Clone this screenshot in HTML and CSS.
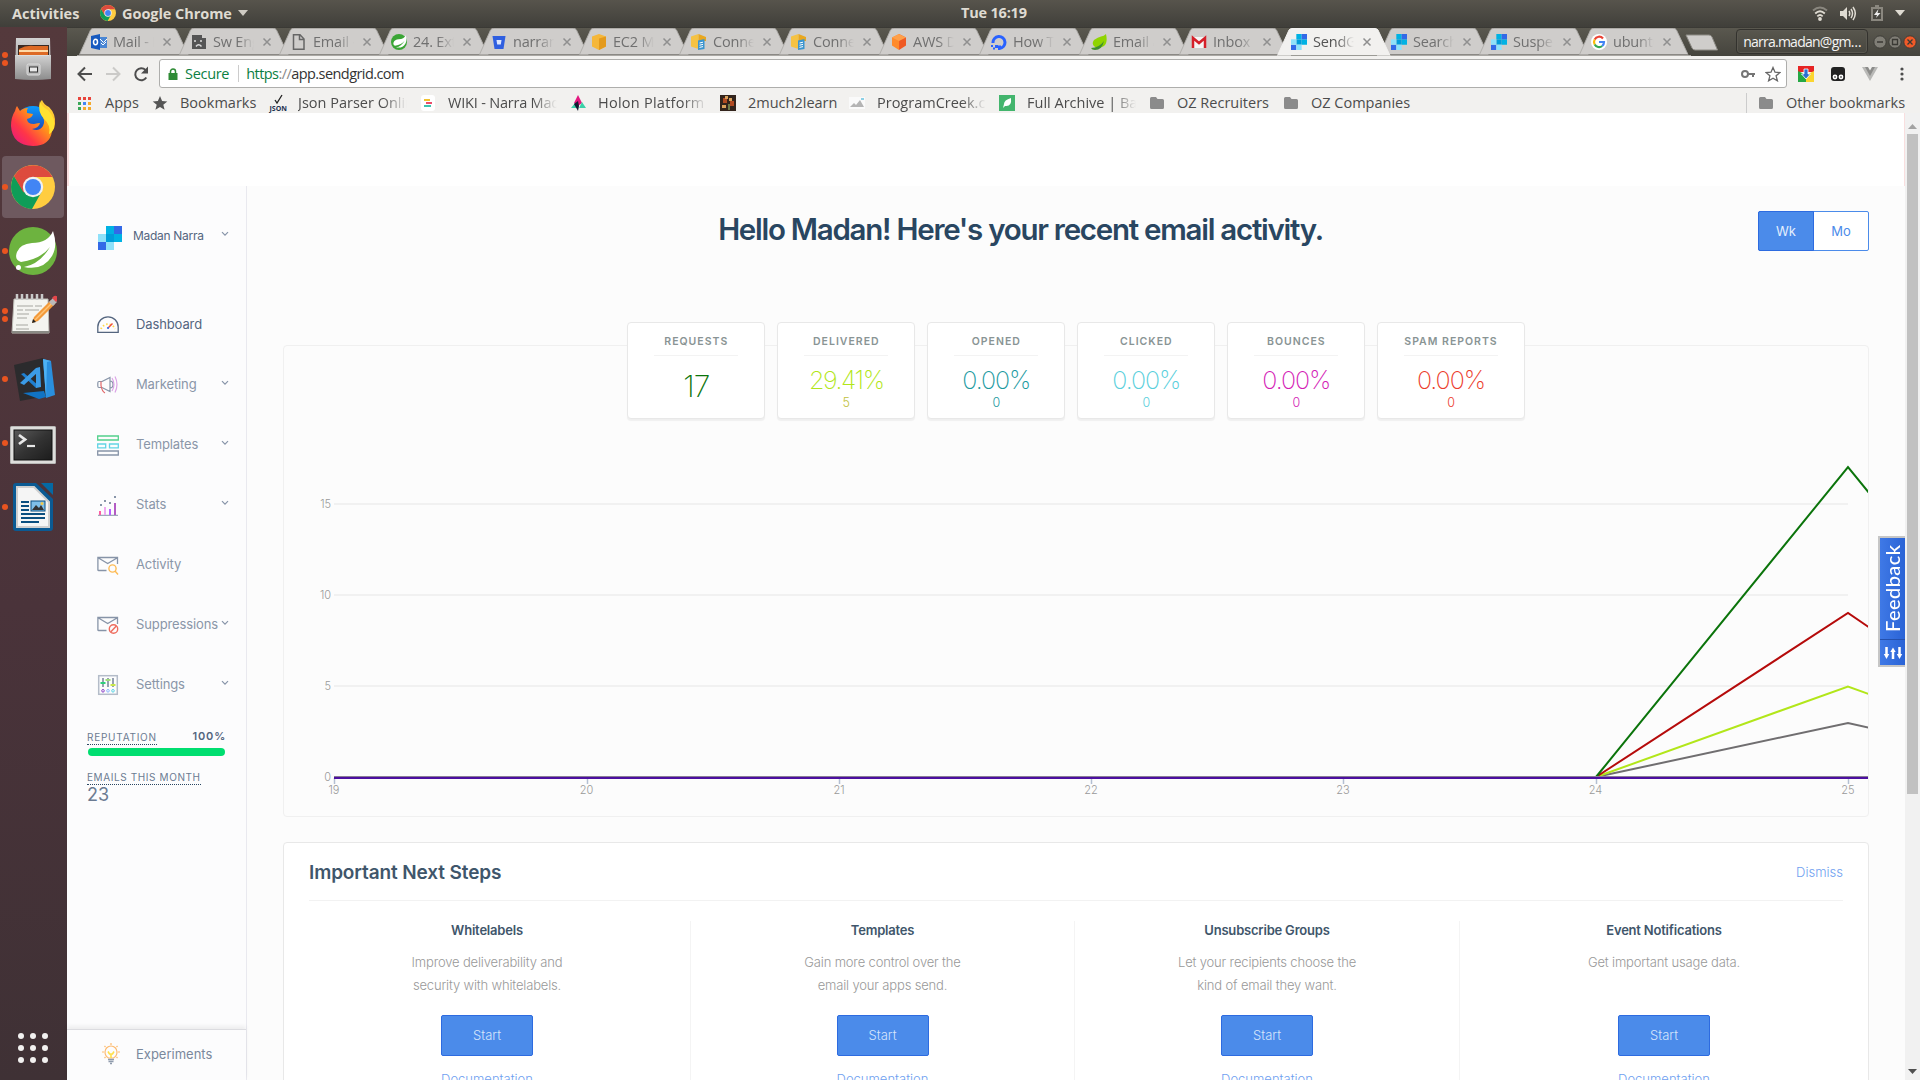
FILE: index.html
```html
<!DOCTYPE html>
<html lang="en">
<head>
<meta charset="utf-8">
<title>SendGrid</title>
<link rel="stylesheet" href="styles.css">
</head>
<body>
<svg class="defs" width="0" height="0" aria-hidden="true">
  <defs>
    <linearGradient id="metal" x1="0" y1="0" x2="0" y2="1"><stop offset="0" stop-color="#d2d2d2"/><stop offset="1" stop-color="#8c8c8c"/></linearGradient>
    <linearGradient id="fox" x1="1" y1="0" x2="0" y2="1"><stop offset="0" stop-color="#fff24a"/><stop offset=".4" stop-color="#ff9a16"/><stop offset=".7" stop-color="#ff3647"/><stop offset="1" stop-color="#e3128b"/></linearGradient>
    <linearGradient id="globe" x1="0" y1="0" x2="0" y2="1"><stop offset="0" stop-color="#0a9bff"/><stop offset="1" stop-color="#2a1b8c"/></linearGradient>
    <linearGradient id="term" x1="0" y1="0" x2="1" y2="1"><stop offset="0" stop-color="#5a5a5a"/><stop offset=".5" stop-color="#333"/><stop offset="1" stop-color="#1c1c1c"/></linearGradient>
    <symbol id="tab" viewBox="0 0 114 28"><path d="M.5 27.5 L12 2 Q13 .5 15 .5 H98 Q100 .5 101 2 L113 27.5" /></symbol>
    <symbol id="close" viewBox="0 0 10 10"><path d="M1.500 1.500 8.500 8.500M8.500 1.500 1.500 8.500" stroke="currentColor" stroke-width="1.500" fill="none"/></symbol>
    <symbol id="sendgrid" viewBox="0 0 24 24"><path fill="#00b2e3" d="M8 0h8v8H8zM16 8h8v8h-8z"/><path fill="#3369e7" d="M16 0h8v8h-8zM0 16h8v8H0z"/><path fill="#009dd9" d="M8 8h8v8H8z"/><path fill="#8fe1fa" d="M0 8h8v8H0zM8 16h8v8H8z"/></symbol>
    <symbol id="chrome" viewBox="0 0 44 44"><circle cx="22" cy="22" r="22" fill="#ffcd40"/><path fill="#dd4b3e" d="M22 22 3 11A22 22 0 0 1 41.500 12H22z"/><path fill="#0f9d58" d="M3 11A22 22 0 0 0 21 44l9.500-17L13 27z"/><path fill="#dd4b3e" d="M3 11 12.500 27.500 22 12z"/><circle cx="22" cy="22" r="10.200" fill="#f1f1f1"/><circle cx="22" cy="22" r="8" fill="#4285f4"/></symbol>
    <symbol id="folder" viewBox="0 0 16 16"><path fill="#8b8b8b" d="M1 3.500Q1 2 2.500 2H7l1.500 2h5Q15 4 15 5.500v7Q15 14 13.500 14h-11Q1 14 1 12.500z"/></symbol>
    <symbol id="cube" viewBox="0 0 16 16"><path fill="#f5b73a" d="M8 0 1 2.500v10L8 16l7-3.500v-10z"/><path fill="#e39a1d" d="M8 4.500 15 2.500v10L8 16z"/></symbol>
    <symbol id="cubedoc" viewBox="0 0 16 16"><path fill="#f5c243" d="M7.500 0 0 2.500v10L7.500 15z"/><path fill="#e8a71f" d="M7.500 0 15 3v4H7.500z"/><path fill="#3b95cf" d="M7 6.500 13.500 5v10L7 16z"/><path stroke="#fff" d="m8.500 9 3.500-.8m-3.500 3 3.500-.8m-3.500 3 3.500-.8"/></symbol>
    <symbol id="chev" viewBox="0 0 8 6"><path d="M1 1.200 4 4.200 7 1.200" fill="none" stroke="#8794a8" stroke-width="1.200"/></symbol>
    <symbol id="mail" viewBox="0 0 22 20"><path d="M9.500 15.500h-8Q.9 15.500.9 14.900V2.500H20.500v6.500M1.500 3l9.200 5.500L20 3" fill="none" stroke="#8794a8" stroke-width="1.300"/></symbol>
  </defs>
</svg>

<header class="topbar">
  <span class="topbar-item">Activities</span>
  <span class="app-menu"><svg width="16" height="16"><use href="#chrome"/></svg><span>Google Chrome</span><svg width="10" height="6" viewBox="0 0 10 6"><path d="M0 0h10L5 6z" fill="#cfcbc3"/></svg></span>
  <span class="clock">Tue 16:19</span>
  <span class="tray">
    <svg width="16" height="15" viewBox="0 0 16 15" fill="none" stroke="#dfdbd2" stroke-width="1.800"><path d="M1 4.500Q8-1.500 15 4.500" stroke="#8a877f"/><path d="M3.200 7.500Q8 3 12.800 7.500M5.300 10.300Q8 7.800 10.700 10.300"/><circle cx="8" cy="13" r="1" fill="#dfdbd2"/></svg>
    <svg width="16" height="15" viewBox="0 0 16 15" fill="none" stroke="#dfdbd2" stroke-width="1.500"><path d="M0 5h3l4-4v13l-4-4H0z" fill="#dfdbd2" stroke="none"/><path d="M9 5q1.500 2.500 0 5M11 3q3 4.500 0 9M13 1q4.500 6.500 0 13"/></svg>
    <svg width="12" height="16" viewBox="0 0 12 16"><path d="M1 3h10v12H1zM4 1h4" fill="none" stroke="#8a877f" stroke-width="2"/><path d="M7.500 4 3 10h3l-1 3 4.500-5h-3z" fill="#eee"/></svg>
    <svg width="10" height="6" viewBox="0 0 10 6"><path d="M0 0h10L5 6z" fill="#dfdbd2"/></svg>
  </span>
</header>

<div class="desktop">
<nav class="dock">
  <div class="dock-item"><i class="dots"><b></b><b></b></i><svg width="48" height="48" viewBox="0 0 48 48"><path d="M7 3h34l1 40H6z" fill="url(#metal)"/><path d="M9 10h31v14H9z" fill="#3a2a24"/><path d="M10 14q7-4 15-3h14v12H10z" fill="#dd6a25"/><path d="M10 16h29" stroke="#ffd9a6" stroke-width="2"/><path d="M6 20h36v24q-18 2-36 0z" fill="url(#metal)"/><path d="M8 20.500h32" stroke="#ddd"/><rect x="18" y="29" width="13" height="11" rx="1.500" fill="#bbb" stroke="#ddd"/><rect x="20.500" y="32" width="8" height="5" fill="#e8e8e8" stroke="#333"/></svg></div>
  <div class="dock-item"><i class="dots"></i><svg width="48" height="48" viewBox="0 -2 48 48"><circle cx="24" cy="24" r="19" fill="url(#globe)"/><path fill="url(#fox)" d="M6 10q1-4 2-5l3 5q3-3 8-3-2 2-1 5l6 1q-1 4-6 5 0 5 7 5 4-1 6-1-1 5-8 6 7 3 11-3 3-6-2-12-2-7 0-13l1-1q2 5 7 7 7 7 6 17 0 4-3 7-2 15-19 15Q3 44 2 25q0-9 4-15z"/><path fill="#ffe232" d="M31 0q2 6 8 9 8 8 6 18-2 5-5 6 2-9-5-15-7-8-4-18z"/></svg></div>
  <div class="dock-item is-active"><i class="dots"><b></b></i><svg width="48" height="48" viewBox="-2 -2 48 48"><use href="#chrome" width="44" height="44"/></svg></div>
  <div class="dock-item"><i class="dots"><b></b></i><svg width="48" height="48" viewBox="0 0 48 48"><circle cx="24" cy="24" r="24" fill="#6db33f"/><path fill="#fff" d="M44 4q5 15-1 25-9 15-28 11 16-3 26-20-9 12-29 15Q5 33 8 25q3-8 15-9 16 0 21-12z"/><circle cx="9.500" cy="40.500" r="2.500" fill="#fff"/></svg></div>
  <div class="dock-item"><i class="dots"><b></b><b></b></i><svg width="48" height="48" viewBox="0 0 48 48"><path d="M5 8h34l1 34H3z" fill="#f4f4f0" stroke="#bdbdb6"/><path d="M3 41h37" stroke="#8a8a84" stroke-width="2"/><path d="M8 3v6m5-6v6m5-6v6m5-6v6m5-6v6m5-6v6" stroke="#c9c9c9" stroke-width="2.500"/><path d="M8 15h16m2 0h7M8 19h6m2 0h14M8 23h12M8 27h10M7 34h12M7 38h13" stroke="#a5a5a0" stroke-width="1.200"/><path d="M23 32l2-6L42 9l4 4-17 17z" fill="#f39a3a"/><path d="M26 29 44 11" stroke="#ffc478" stroke-width="1.500"/><path d="m40 11 4-4 4 4-4 4z" fill="#b9b9b9"/><path d="m43 7 2-2q4-1 4 3l-2 3z" fill="#e4474b"/><path d="m23 32 1-4 3 3z" fill="#222"/></svg></div>
  <div class="dock-item"><i class="dots"><b></b></i><svg width="48" height="48" viewBox="0 0 48 48"><path d="M5 10 34 3l9 37-32 6z" fill="#2b2b2d"/><path d="m34 4 8 2 4 34-9 3z" fill="#2a8fde"/><path d="m34 4 8 2-4 1-1 36z" fill="#4db2f5"/><path d="m14 38 21-2 2 6-7 2z" fill="#1173c4"/><path d="m12 19 3-1 15 13-3 2z" fill="#1f7fd0"/><path d="m27 13 4-1 1 20-5 1zM11 28l16-15 1 5-13 12z" fill="#3b9be6"/></svg></div>
  <div class="dock-item"><i class="dots"><b></b></i><svg width="48" height="48" viewBox="0 -1 48 48"><rect x="1" y="6" width="46" height="38" rx="1.500" fill="#b9b9b7"/><rect x="2" y="7" width="44" height="36" fill="#dededc"/><rect x="5" y="10" width="38" height="30" fill="url(#term)" stroke="#111"/><path d="m10 15 6 4.500L10 24" fill="none" stroke="#e8e8e8" stroke-width="2.800"/><path d="M18 26h8" stroke="#e8e8e8" stroke-width="2.200"/></svg></div>
  <div class="dock-item"><i class="dots"><b></b></i><svg width="48" height="48" viewBox="0 0 48 48"><path d="M7 0h20l17 16v29q0 3-3 3H7q-3 0-3-3V3q0-3 3-3z" fill="#0b5a93"/><path d="M32 0h12v12z" fill="#0569a3"/><path d="M8 4h17l15 15v25H8z" fill="#f5f5f5" stroke="#cfcfcf" stroke-width="2"/><path d="M12 19h8M12 23h8M12 27h8M12 31h24M12 35h24M12 39h18" stroke="#0b4f80" stroke-width="2"/><rect x="22" y="18" width="14" height="10" fill="#7fbfe8" stroke="#0b4f80"/><path d="m23 27 4-5 3 3 2-3 3 5z" fill="#333"/><circle cx="33" cy="20.500" r="1.500" fill="#f2c94c"/></svg></div>
  <svg class="apps-grid" width="32" height="32" viewBox="0 0 32 32" fill="#f2f1f0"><circle cx="4" cy="4" r="3"/><circle cx="16" cy="4" r="3"/><circle cx="28" cy="4" r="3"/><circle cx="4" cy="16" r="3"/><circle cx="16" cy="16" r="3"/><circle cx="28" cy="16" r="3"/><circle cx="4" cy="28" r="3"/><circle cx="16" cy="28" r="3"/><circle cx="28" cy="28" r="3"/></svg>
</nav>

<div class="window">
  <div class="tabstrip">
    <div class="tab"><svg class="shape"><use href="#tab"/></svg><svg class="fav" viewBox="0 0 16 16"><path fill="#4a86d4" d="M8 3h8v11H8z"/><path d="m9 5 3.500 3.500L16 5M10 9l2 2 3-3" stroke="#fff" fill="none"/><path fill="#1659bf" d="m0 2 9-2v16l-9-2z"/><ellipse cx="4.500" cy="8" rx="2" ry="2.700" fill="none" stroke="#fff" stroke-width="1.500"/></svg><span>Mail - M</span><svg class="x"><use href="#close"/></svg></div>
    <div class="tab"><svg class="shape"><use href="#tab"/></svg><svg class="fav" viewBox="0 0 16 16"><path fill="#555" d="M1 1h10v3h4v11H1z"/><path stroke="#ddd" d="M4 6v2m6-2v2M5 12.500Q7.500 9 10.500 12.500" fill="none" stroke-width="1.500"/></svg><span>Sw Engi</span><svg class="x"><use href="#close"/></svg></div>
    <div class="tab"><svg class="shape"><use href="#tab"/></svg><svg class="fav" viewBox="0 0 16 16"><path d="M2.500.8H9L13 5v10.200H2.500zM8.500 1v4.500H13" fill="none" stroke="#666" stroke-width="1.500"/></svg><span>Email -</span><svg class="x"><use href="#close"/></svg></div>
    <div class="tab"><svg class="shape"><use href="#tab"/></svg><svg class="fav" viewBox="0 0 48 48"><circle cx="24" cy="24" r="24" fill="#3aa535"/><path fill="#fff" d="M44 4q5 15-1 25-9 15-28 11 16-3 26-20-9 12-29 15Q5 33 8 25q3-8 15-9 16 0 21-12z"/></svg><span>24. Exte</span><svg class="x"><use href="#close"/></svg></div>
    <div class="tab"><svg class="shape"><use href="#tab"/></svg><svg class="fav" viewBox="0 0 16 16"><path fill="#2f5fe0" d="M1.500 2h13l-2 13h-9z"/><path fill="#dce6ff" d="M5.500 6h5l-.7 4.500H6.200z"/></svg><span>narram</span><svg class="x"><use href="#close"/></svg></div>
    <div class="tab"><svg class="shape"><use href="#tab"/></svg><svg class="fav"><use href="#cube"/></svg><span>EC2 Ma</span><svg class="x"><use href="#close"/></svg></div>
    <div class="tab"><svg class="shape"><use href="#tab"/></svg><svg class="fav"><use href="#cubedoc"/></svg><span>Connec</span><svg class="x"><use href="#close"/></svg></div>
    <div class="tab"><svg class="shape"><use href="#tab"/></svg><svg class="fav"><use href="#cubedoc"/></svg><span>Connec</span><svg class="x"><use href="#close"/></svg></div>
    <div class="tab"><svg class="shape"><use href="#tab"/></svg><svg class="fav" viewBox="0 0 16 16"><path fill="#ff8a2a" d="M8 0 1 3.500v8L8 16z"/><path fill="#ef5a24" d="m8 0 7 3.500v8L8 16z"/><path fill="#ffa04a" d="m8 0 7 3.500L8 7 1 3.500z"/></svg><span>AWS De</span><svg class="x"><use href="#close"/></svg></div>
    <div class="tab"><svg class="shape"><use href="#tab"/></svg><svg class="fav" viewBox="0 0 16 16"><path d="M2 9a6 6 0 1 1 6.500 5.500v-3" fill="none" stroke="#2962ff" stroke-width="3"/><path fill="#2962ff" d="M4 11h3v3H4zM2 13.500h2v2H2zM0 11h2v2H0z"/></svg><span>How To</span><svg class="x"><use href="#close"/></svg></div>
    <div class="tab"><svg class="shape"><use href="#tab"/></svg><svg class="fav" viewBox="0 0 16 16"><path fill="#8fd400" d="M15 0q2 9-2 12-4 3-9 1Q0 10 3 6q4-3 7-3.500T15 0z"/><path fill="#3f8f2f" d="M0 14q8 0 13-7-2 9-9 9-3 0-4-2z"/></svg><span>Email a</span><svg class="x"><use href="#close"/></svg></div>
    <div class="tab"><svg class="shape"><use href="#tab"/></svg><svg class="fav" viewBox="0 0 16 16"><path fill="#f5f5f5" d="M1 3h14v11H1z"/><path d="M2 14V4l6 5 6-5v10" fill="none" stroke="#d5202a" stroke-width="2.500"/></svg><span>Inbox (1</span><svg class="x"><use href="#close"/></svg></div>
    <div class="tab current"><svg class="shape"><use href="#tab"/></svg><svg class="fav"><use href="#sendgrid"/></svg><span>SendGr</span><svg class="x"><use href="#close"/></svg></div>
    <div class="tab"><svg class="shape"><use href="#tab"/></svg><svg class="fav"><use href="#sendgrid"/></svg><span>Search</span><svg class="x"><use href="#close"/></svg></div>
    <div class="tab"><svg class="shape"><use href="#tab"/></svg><svg class="fav"><use href="#sendgrid"/></svg><span>Suspen</span><svg class="x"><use href="#close"/></svg></div>
    <div class="tab"><svg class="shape"><use href="#tab"/></svg><svg class="fav" viewBox="0 0 16 16"><circle cx="8" cy="8" r="8" fill="#fff"/><g fill="none" stroke-width="2.200"><path d="M12 4.500A5 5 0 0 0 3.700 5.500" stroke="#ea4335"/><path d="M3.700 5.500a5 5 0 0 0 0 5" stroke="#fbbc05"/><path d="M3.700 10.500a5 5 0 0 0 7.500 1.500" stroke="#34a853"/><path d="M11.200 12q1.800-1.500 1.800-4H8" stroke="#4285f4"/></g></svg><span>ubuntu</span><svg class="x"><use href="#close"/></svg></div>
    <svg class="newtab" width="34" height="17" viewBox="0 0 34 17"><path d="M1 1h23q2 0 3 2l5.500 13H10q-2 0-3-2z" fill="#cfcdcb" stroke="#8e8c86"/></svg>
    <div class="profile">narra.madan@gm…</div>
    <svg class="winbtns" width="44" height="14" viewBox="0 0 44 14"><g fill="#807e76" stroke="#3d3c37"><circle cx="7" cy="7" r="6.200"/><circle cx="22" cy="7" r="6.200"/><circle cx="37" cy="7" r="6.200" fill="#f05a28"/></g><path d="M4 7h6M19.500 4.500h5v5h-5zM34.500 4.500l5 5m0-5-5 5" fill="none" stroke="#3a3934" stroke-width="1.300"/></svg>
  </div>

  <div class="toolbar">
    <div class="navbtns">
      <svg width="16" height="16" viewBox="0 0 16 16" fill="none" stroke="#4d4d4d" stroke-width="2"><path d="M15 8H2M8 1.500 1.500 8 8 14.500"/></svg>
      <svg width="16" height="16" viewBox="0 0 16 16" fill="none" stroke="#cbcac8" stroke-width="2"><path d="M1 8h13M8 1.500 14.500 8 8 14.500"/></svg>
      <svg width="16" height="16" viewBox="0 0 16 16"><path d="M13.300 11.500A6 6 0 1 1 12.500 4" fill="none" stroke="#4d4d4d" stroke-width="2"/><path d="M15 .5v7H8z" fill="#4d4d4d"/></svg>
    </div>
    <div class="omnibox">
      <svg width="10" height="12" viewBox="0 0 10 12"><path d="M.5 5h9v7h-9z" fill="#2e8b35"/><path d="M2.500 5.500V3.500a2.500 2.500 0 0 1 5 0v2" fill="none" stroke="#2e8b35" stroke-width="1.500"/></svg>
      <span class="secure">Secure</span>
      <span class="url"><em>https</em><i>://</i>app.sendgrid.com</span>
      <svg width="15" height="10" viewBox="0 0 15 10"><circle cx="4" cy="5" r="3" fill="none" stroke="#757575" stroke-width="2"/><path d="M6.500 4H14v2h-1v2h-2V6H6.500z" fill="#757575"/></svg>
      <svg class="fav-star" width="16" height="16" viewBox="0 0 16 16"><path d="m8 1.500 2 4.700 5 .4-3.900 3.200 1.300 5L8 12.200l-4.400 2.600 1.300-5L1 6.600l5-.4z" fill="none" stroke="#666" stroke-width="1.300"/></svg>
    </div>
    <div class="extensions">
      <svg width="16" height="16" viewBox="0 0 16 16"><path fill="#e62424" d="M0 0h16v6H0z"/><path fill="#25a844" d="M0 5 8 9v7H0z"/><path fill="#fbd530" d="M16 5 8 9v7h8z"/><path fill="#2b6fd3" stroke="#fff" stroke-width=".8" d="M6 3h4v5h2.500L8 13 3.500 8H6z"/></svg>
      <svg width="16" height="16" viewBox="0 0 16 16"><rect x="1" y="1" width="14" height="14" rx="3" fill="#222"/><circle cx="5" cy="11" r="2.400" fill="#fff"/><circle cx="11" cy="11" r="2.400" fill="#fff"/><path d="M5 10v2m6-2v2" stroke="#222"/></svg>
      <svg width="16" height="16" viewBox="0 0 16 16"><path fill="#b9b9b7" d="M0 1h4.500L8 7.500 11.500 1H16L8 15z"/><path fill="#8c8c8a" d="M3 1h3l2 3.500L10 1h3L8 10z"/></svg>
      <svg class="kebab" width="4" height="14" viewBox="0 0 4 14" fill="#4d4d4d"><circle cx="2" cy="2" r="1.600"/><circle cx="2" cy="7" r="1.600"/><circle cx="2" cy="12" r="1.600"/></svg>
    </div>
  </div>

  <div class="bookmarks">
    <a><svg viewBox="0 0 16 16"><path fill="#e8453c" d="M1 2h3v3H1zM6 2h3v3H6zM11 2h3v3h-3z"/><path fill="#4285f4" d="M6 7h3v3H6z"/><path fill="#3aa757" d="M1 7h3v3H1zM1 12h3v3H1z"/><path fill="#f4a92b" d="M11 7h3v3h-3zM6 12h3v3H6zM11 12h3v3h-3z"/></svg><span>Apps</span></a>
    <a><svg viewBox="0 0 16 16"><path fill="#555" d="m8 1 2.100 5 5.200.4-4 3.300 1.300 5L8 12l-4.600 2.700 1.300-5-4-3.300L5.900 6z"/></svg><span>Bookmarks</span></a>
    <a><svg viewBox="0 0 16 16"><path d="m5 5 2 3 5-8" fill="none" stroke="#222" stroke-width="1.300"/><text x="-.5" y="15.500" class="json">JSON</text></svg><span class="fade">Json Parser Onlin</span></a>
    <a><svg viewBox="0 0 16 16"><rect x="1" width="14" height="16" rx="3" fill="#fff"/><path stroke="#f2c230" stroke-width="2" d="M4 5h6"/><path stroke="#ea4d6b" stroke-width="2" d="M6 8h6"/><path stroke="#3cc3b0" stroke-width="2" d="M4 11h7"/></svg><span class="fade tight">WIKI - Narra Mada</span></a>
    <a><svg viewBox="0 0 16 16"><path fill="#e3177f" d="m8 0 4 8-4 3-4-3z"/><path fill="#3cd0a8" d="m1 13 4-5 3 5zM9 13l3-6 4 6z"/><path fill="#141c33" d="m4 9 4-3 1 5-1 5z"/></svg><span class="fade loose">Holon Platform -</span></a>
    <a><svg viewBox="0 0 16 16"><path fill="#33241c" d="M0 0h16v16H0z"/><path fill="#b04a22" d="M3 3h4v5H3zM10 6h4v5h-4z"/><path fill="#d9a15c" d="M5 1h3v3H5zM9 3h3v3H9zM2 10h4v3H2z"/><path fill="#6e7a4a" d="M8 9h2v6H8z"/></svg><span>2much2learn</span></a>
    <a><svg viewBox="0 0 16 16"><path fill="#fafafa" d="M0 2h16v12H0z"/><path fill="#b4b4b4" d="m1 12 4-4 2 2 4-5 4 7z"/><path fill="#8cd0e6" d="M12 3h3v2h-3z"/></svg><span class="fade">ProgramCreek.com</span></a>
    <a><svg viewBox="0 0 16 16"><path fill="#43b56d" d="M0 0h16v16H0z"/><path fill="#fff" d="M12 3q1 9-6 8l-2 2 1-4q0-4 7-6z"/></svg><span class="fade">Full Archive | Bael</span></a>
    <a><svg><use href="#folder"/></svg><span>OZ Recruiters</span></a>
    <a><svg><use href="#folder"/></svg><span>OZ Companies</span></a>
    <a class="other"><svg><use href="#folder"/></svg><span>Other bookmarks</span></a>
  </div>

  <div class="viewport">
    <div class="page">
      <div class="banner"></div>
      <div class="app">
        <aside class="sidebar">
          <div class="account"><svg width="24" height="24"><use href="#sendgrid"/></svg><span>Madan Narra</span><svg class="chev"><use href="#chev"/></svg></div>
          <ul class="menu">
            <li class="on"><svg viewBox="0 0 22 20"><path d="M.8 17.400V12a10.200 10.200 0 0 1 20.400 0v5.400z" fill="none" stroke="#54657f" stroke-width="1.300"/><path d="M4 14a7.500 7.500 0 0 1 14 0" fill="none" stroke="#ffd84a" stroke-width="1.800" stroke-dasharray="1.500 2"/><path d="m11 13 4.500-4.500" stroke="#ee4b3c" stroke-width="1.500"/><circle cx="11" cy="13" r="1.100" fill="#3369e7"/></svg><span>Dashboard</span></li>
            <li><svg viewBox="0 0 22 20"><path d="m5 6.500 8-4v14l-8-4H2Q.8 12.500.8 11V8q0-1.500 1.200-1.500zM13 6q3 0 3 3.500T13 13" fill="none" stroke="#8794a8" stroke-width="1.200"/><path d="M4 6.500v4q1 6 4 7.500" fill="none" stroke="#e2686a" stroke-width="1.200"/><path d="M15 3q4 6.500 0 13M18 1.500q4 8 0 16" fill="none" stroke="#dba4e6" stroke-width="1.200"/></svg><span>Marketing</span><svg class="chev"><use href="#chev"/></svg></li>
            <li><svg viewBox="0 0 22 22"><g fill="none" stroke-width="1.300"><path d="M.7 2h20.600v4H.7z" stroke="#53d08c"/><path d="M.7 10h8v3.800h-8zM12.500 10h8.800v3.800h-8.800z" stroke="#62d4e4"/><path d="M.7 17h20.600v4H.7z" stroke="#8794a8"/></g></svg><span>Templates</span><svg class="chev"><use href="#chev"/></svg></li>
            <li><svg viewBox="0 0 22 22"><path d="M1 21.300h20" stroke="#8794a8"/><path d="M3 21v-4" stroke="#ff5fa5" stroke-width="2"/><path d="M8 21v-8" stroke="#f1a8f0" stroke-width="2"/><path d="M13 21v-6" stroke="#b861ff" stroke-width="2"/><path d="M18 21V9" stroke="#b35cc4" stroke-width="2"/><path d="M3 10h2v2H3zM7 6h2v2H7zM12 8h2v2h-2zM17 2h2v2h-2z" fill="#8794a8"/></svg><span>Stats</span><svg class="chev"><use href="#chev"/></svg></li>
            <li><svg viewBox="0 0 22 20"><use href="#mail" width="22" height="20"/><circle cx="15.500" cy="13.500" r="3.600" fill="#fcfcfd" stroke="#fdbb55" stroke-width="1.400"/><path d="m18 16 3 3.500" stroke="#fdbb55" stroke-width="1.400"/></svg><span>Activity</span></li>
            <li><svg viewBox="0 0 22 20"><use href="#mail" width="22" height="20"/><circle cx="16.500" cy="14" r="4.200" fill="#fcfcfd" stroke="#ee6c5e" stroke-width="1.400"/><path d="m13.700 17 5.600-6" stroke="#ee6c5e" stroke-width="1.400"/></svg><span>Suppressions</span><svg class="chev"><use href="#chev"/></svg></li>
            <li><svg viewBox="0 0 22 22"><rect x="1.700" y="1.700" width="18.600" height="18.600" fill="none" stroke="#b4bcc9" stroke-width="1.500"/><path d="M6 4v9M11 4v9M16 4v9" stroke="#54657f" stroke-width="1.200"/><path d="M3.500 9h5" stroke="#2fcf7b" stroke-width="2"/><path d="M8.500 6h5" stroke="#9edb7c" stroke-width="2"/><path d="M13.500 11h5" stroke="#c8e64a" stroke-width="2"/><g fill="none"><circle cx="6" cy="16.800" r="1.300" stroke="#8e44c9"/><circle cx="11" cy="16.800" r="1.300" stroke="#8eb8ff"/><circle cx="16" cy="16.800" r="1.300" stroke="#5cd5e5"/></g></svg><span>Settings</span><svg class="chev"><use href="#chev"/></svg></li>
          </ul>
          <div class="usage">
            <div class="rep"><abbr>REPUTATION</abbr><strong>100%</strong></div>
            <div class="bar"></div>
            <abbr class="emails">EMAILS THIS MONTH</abbr>
            <div class="count">23</div>
          </div>
          <div class="experiments"><svg width="20" height="22" viewBox="0 0 20 22"><path d="M7.500 15q-3.500-2-3.500-6a6 6 0 0 1 12 0q0 4-3.500 6z" fill="none" stroke="#fdbb70" stroke-width="1.200"/><path d="M10 0v2M1 9H3M17 9h2M3.500 3l1 1M16.500 3l-1 1M3.500 15l1-1M16.500 15l-1-1" stroke="#fdbb70" stroke-width="1.200"/><path d="M7 8.500l1.500 2.500h3L13 8.500M10 11v4" fill="none" stroke="#ffe04a" stroke-width="1.600"/><path d="M7 16.500h6M7.500 18.500h5M9 20.500h2" stroke="#8f9bad" stroke-width="1.600"/></svg><span>Experiments</span></div>
        </aside>

        <main class="main">
          <div class="hero">
            <h1>Hello Madan! Here's your recent email activity.</h1>
            <div class="toggle"><span class="sel">Wk</span><span>Mo</span></div>
          </div>
          <section class="chart">
            <div class="cards">
              <div class="card c-req"><h4>REQUESTS</h4><p>17</p></div>
              <div class="card c-del"><h4>DELIVERED</h4><p>29.41%</p><small>5</small></div>
              <div class="card c-ope"><h4>OPENED</h4><p>0.00%</p><small>0</small></div>
              <div class="card c-cli"><h4>CLICKED</h4><p>0.00%</p><small>0</small></div>
              <div class="card c-bou"><h4>BOUNCES</h4><p>0.00%</p><small>0</small></div>
              <div class="card c-spa"><h4>SPAM REPORTS</h4><p>0.00%</p><small>0</small></div>
            </div>
            <svg class="plot" viewBox="284 419 1584 396">
              <path d="M334 504H1848M334 595H1848M334 686H1848" stroke="#f1f1f1" stroke-width="2"/>
              <path d="M334.500 778v6M587.500 778v6M839.500 778v6M1091.500 778v6M1343.500 778v6M1596.500 778v6M1848.500 778v6" stroke="#b3bfd2" stroke-width="1.500"/>
              <g fill="none" stroke-width="2">
                <path d="M334 777H1596L1848 723l22 5" stroke="#706e70"/>
                <path d="M1596 777 1848 686.500l22 8" stroke="#b2e61a"/>
                <path d="M1596 777 1848 613l22 15" stroke="#b50b0b"/>
                <path d="M1596 777 1848 467l22 27" stroke="#0b740b"/>
                <path d="M334 776.500H1870" stroke="#8a7f96" stroke-width="1"/>
                <path d="M334 778H1870" stroke="#4c0fa0"/>
              </g>
              <g class="ylab"><text x="331" y="507.500">15</text><text x="331" y="599">10</text><text x="331" y="690">5</text><text x="331" y="781">0</text></g>
              <g class="xlab"><text x="334" y="794">19</text><text x="586.500" y="794">20</text><text x="839" y="794">21</text><text x="1091" y="794">22</text><text x="1343" y="794">23</text><text x="1595.500" y="794">24</text><text x="1848" y="794">25</text></g>
            </svg>
          </section>
          <section class="steps">
            <div class="steps-head"><h2>Important Next Steps</h2><a>Dismiss</a></div>
            <div class="steps-grid">
              <div class="step"><h3>Whitelabels</h3><p>Improve deliverability and<br>security with whitelabels.</p><button>Start</button><a>Documentation</a></div>
              <div class="step"><h3>Templates</h3><p>Gain more control over the<br>email your apps send.</p><button>Start</button><a>Documentation</a></div>
              <div class="step"><h3>Unsubscribe Groups</h3><p>Let your recipients choose the<br>kind of email they want.</p><button>Start</button><a>Documentation</a></div>
              <div class="step"><h3>Event Notifications</h3><p>Get important usage data.</p><button>Start</button><a>Documentation</a></div>
            </div>
          </section>
          <div class="feedback"><span>Feedback</span><svg width="20" height="14" viewBox="0 0 20 14" stroke="#fff" stroke-width="2.500" fill="#fff"><path d="M3.500 1v8M10 13V5M16.500 1v8"/><path d="M.8 8h5.400l-2.700 5zM7.300 6h5.400L10 1.500zM13.800 8h5.400l-2.700 5z" stroke="none"/></svg></div>
        </main>
      </div>
    </div>
    <div class="scrollbar"><svg width="9" height="5" viewBox="0 0 9 5"><path d="M0 5h9L4.500 0z" fill="#a3a3a3"/></svg><div class="thumb"></div><svg width="9" height="5" viewBox="0 0 9 5"><path d="M0 0h9L4.500 5z" fill="#505050"/></svg></div>
  </div>
</div>
</div>
</body>
</html>
```

FILE: styles.css
```css
* { box-sizing: border-box; margin: 0; padding: 0; }
html, body { width: 1920px; height: 1080px; overflow: hidden; }
body { display: flex; flex-direction: column; font-family: "Open Sans", "Noto Sans", sans-serif; background: #fcfcfc; }
svg { display: block; flex: none; }
.defs { position: absolute; }

/* desktop shell */
.topbar { height: 27px; flex: none; display: grid; grid-template-columns: 100px 1fr auto 1fr; align-items: center; padding-bottom: 1px; background: linear-gradient(#57544c, #403f3a); color: #dfdbd2; font: 700 14.5px "Open Sans", sans-serif; position: relative; }
.topbar-item { padding-left: 12px; letter-spacing: 0; }
.app-menu { display: flex; align-items: center; gap: 6px; letter-spacing: -.05px; }
.clock { position: absolute; left: 961px; top: 3px; letter-spacing: -.2px; }
.tray { grid-column: 4; justify-self: end; display: flex; align-items: center; gap: 12px; padding-right: 15px; }
.tray svg:nth-child(3) { margin: 0 0 0 3px; }
.desktop { flex: 1; display: flex; min-height: 0; }
.dock { width: 67px; flex: none; display: flex; flex-direction: column; gap: 2px; background: linear-gradient(#54393c, #4a333a 55%, #3f3135); }
.dock-item { width: 62px; height: 62px; margin-left: 2px; display: flex; align-items: center; border-radius: 4px; }
.dock-item:first-child { margin-top: 1px; }
.dock-item.is-active { background: #6e595f; }
.dots { width: 7px; display: flex; flex-direction: column; gap: 2px; }
.dots b { width: 6px; height: 6px; border-radius: 50%; background: #e95420; }
.apps-grid { margin: auto 0 16px 17px; }

/* browser chrome */
.window { flex: 1; min-width: 0; display: flex; flex-direction: column; background: #f2f1ef; }
.tabstrip { height: 29px; flex: none; display: flex; align-items: flex-end; padding-left: 24px; background: linear-gradient(#5a584f, #45443d); border-top: 1px solid #3b3a35; }
.tab { position: relative; width: 100px; height: 28px; flex: none; display: flex; align-items: center; color: #707070; font-size: 14.5px; }
.tab > * { position: relative; }
.tab .shape { position: absolute; left: -14px; top: 0; width: 114px; height: 28px; fill: #cfcdcb; stroke: #b0aeab; border-bottom: 1px solid #aaa8a4; }
.tab .fav { width: 16px; height: 16px; }
.tab span { width: 41px; margin: -1px 8px 0 6px; overflow: hidden; white-space: nowrap; letter-spacing: -.2px; -webkit-mask-image: linear-gradient(90deg, #000 60%, transparent); mask-image: linear-gradient(90deg, #000 60%, transparent); }
.tab .x { width: 10px; height: 10px; margin-top: -1px; color: #8f8f8f; }
.tab.current { color: #555; z-index: 2; }
.tab.current .shape { fill: #f2f1ef; stroke: #f2f1ef; border-bottom: 0; }
.newtab { margin: 0 0 5px -6px; }
.profile { width: 132px; height: 25px; margin: 0 5px 2px 17px; flex: none; border: 1px solid #33322e; border-radius: 4px; box-shadow: inset 0 0 0 1px #5a5850; color: #f5f4f2; font-size: 14px; line-height: 23px; letter-spacing: -.75px; text-align: center; white-space: nowrap; }
.winbtns { margin-bottom: 7px; }
.toolbar { height: 36px; flex: none; display: flex; align-items: center; padding: 0 16px 1px 10px; }
.navbtns { display: flex; gap: 12px; width: 82px; }
.omnibox { width: 1628px; height: 29px; display: flex; align-items: center; padding: 0 5px 0 8px; border: 1px solid #aeaeac; border-radius: 3px; background: #fff; font-size: 14.5px; color: #333; }
.secure { margin: 0 9px 0 7px; padding-right: 9px; border-right: 1px solid #ccc; color: #0b8043; line-height: 17px; letter-spacing: -.3px; }
.url { flex: 1; letter-spacing: -.56px; margin-left: -2px; }
.url em { font-style: normal; color: #0b8043; }
.url i { font-style: normal; color: #888; }
.fav-star { margin-left: 9px; }
.extensions { flex: 1; display: flex; align-items: center; gap: 16px; padding-left: 11px; }
.kebab { margin-left: auto; }
.bookmarks { height: 21px; flex: none; display: grid; grid-template-columns: 75px 118px 150px 150px 150px 129px 150px 150px 134px 1fr 160px; align-items: center; padding: 0 14px 0 10px; color: #4c4c4c; font-size: 14.5px; line-height: 20px; }
.bookmarks a { display: flex; align-items: center; gap: 12px; white-space: nowrap; }
.bookmarks svg { width: 16px; height: 16px; overflow: visible; }
.json { font: 700 7px "Open Sans", sans-serif; fill: #1d3150; }
.bookmarks .fade { width: 109px; overflow: hidden; -webkit-mask-image: linear-gradient(90deg, #000 78%, transparent); mask-image: linear-gradient(90deg, #000 78%, transparent); }
.bookmarks .loose { letter-spacing: .25px; }
.bookmarks .tight { letter-spacing: -.2px; }
.other { border-left: 1px solid #ccc; padding-left: 11px; }

/* viewport */
.viewport { flex: 1; min-height: 0; display: flex; }
.page { flex: 1; display: flex; flex-direction: column; background: #fcfcfc; font-family: Inter, sans-serif; min-width: 0; }
.banner { height: 73px; flex: none; background: #fff; border-left: 2px solid #f9dfdf; border-right: 1px solid #f9dfdf; }
.app { flex: 1; display: flex; min-height: 0; }
.scrollbar { width: 15px; flex: none; background: #f1f1f1; display: flex; flex-direction: column; align-items: center; padding: 11px 0 6px; }
.thumb { width: 11px; height: 660px; margin: 5px 0 auto; background: #c1c1c1; }

/* sidebar */
.sidebar { width: 180px; flex: none; display: flex; flex-direction: column; background: #fcfcfd; border-right: 1px solid #e9e9ef; color: #8a96a8; font-size: 13px; }
.account { display: flex; align-items: center; margin: 40px 17px 0 31px; color: #54657f; font-size: 12px; letter-spacing: -.3px; }
.account span { margin-left: 11px; margin-top: -5px; }
.chev { width: 8px; height: 6px; margin: -5px 0 0 auto; }
.account .chev { margin-top: -8px; }
.menu { list-style: none; margin-top: 45px; }
.menu li { height: 60px; display: flex; align-items: center; padding: 0 17px 0 30px; }
.menu li > svg:first-child { width: 22px; height: 22px; }
.menu li span { margin: -2px 0 0 17px; letter-spacing: -.12px; }
.menu li.on { color: #54657f; }
.usage { padding: 16px 20px 0; color: #6b7b92; }
.rep { display: flex; justify-content: space-between; align-items: flex-start; height: 14px; }
abbr { font-size: 10px; line-height: 13px; letter-spacing: .75px; border-bottom: 1px dotted #294661; }
.rep strong { margin-top: -1px; font-size: 11px; line-height: 12px; font-weight: 600; letter-spacing: .8px; color: #54657f; }
.bar { height: 8px; margin: 3px 1px 15px 1px; border-radius: 4px; background: #00de70; }
.emails { display: block; width: max-content; letter-spacing: .6px; }
.count { font-size: 18px; line-height: 19px; }
.experiments { margin-top: auto; height: 51px; display: flex; align-items: center; padding: 0 0 2px 34px; background: #fcfcfd; border-top: 1px solid #dcdce0; box-shadow: 0 -3px 4px rgba(0,0,0,.06); color: #7a889c; }
.experiments span { margin-left: 15px; }

/* main */
.main { flex: 1; position: relative; padding: 25px 36px 0; overflow: hidden; }
.hero { display: flex; height: 134px; }
h1 { flex: 1; text-align: center; font-size: 29.5px; line-height: 37px; font-weight: 600; letter-spacing: -1.26px; color: #294661; }
.toggle { width: 111px; height: 40px; display: flex; border: 1px solid #4b8bea; border-radius: 2px; background: #fff; font-size: 13px; color: #4b8bea; }
.toggle span { flex: 1; display: grid; place-items: center; }
.toggle .sel { background: #4b8bea; color: #e4effd; border: 1px solid #2d6be0; margin: -1px 0 -1px -1px; border-radius: 2px 0 0 2px; }
.chart { height: 472px; border: 1px solid #f0f0f0; border-radius: 4px; background: #fcfcfc; }
.cards { display: flex; justify-content: center; gap: 12px; margin-top: -24px; }
.card { min-width: 138px; height: 97px; padding: 11px 26px 0; display: flex; flex-direction: column; align-items: center; background: #fff; border: 1px solid #e8e8e8; border-radius: 4px; box-shadow: 0 2px 1px rgba(0,0,0,.05); }
.card h4 { align-self: stretch; height: 22px; text-align: center; white-space: nowrap; font-size: 10.5px; line-height: 16px; letter-spacing: 1px; font-weight: 600; color: #899494; border-bottom: 1px solid #f3f3f3; }
.card p { margin-top: 9px; font-size: 25px; line-height: 31px; font-weight: 200; letter-spacing: -1px; }
.card small { font-size: 12.500px; line-height: 14px; font-weight: 300; }
.c-req { color: #0b740b; }
.c-req p { font-size: 30px; line-height: 36px; margin-top: 12px; }
.c-del { color: #b2e61a; }
.c-del p { letter-spacing: -1.4px; }
.c-del small { color: #bfc13c; }
.c-ope { color: #1c9a9f; }
.c-cli { color: #59cfdc; }
.c-bou { color: #d41cb6; }
.c-spa { color: #ec3c2c; }
.plot { width: 1584px; height: 396px; font-size: 11px; font-weight: 300; fill: #999; }
.ylab { text-anchor: end; }
.xlab { text-anchor: middle; }
.steps { margin-top: 25px; height: 300px; background: #fff; border: 1px solid #e8e8e8; border-radius: 4px; }
.steps-head { height: 58px; margin: 0 25px; display: flex; justify-content: space-between; align-items: center; border-bottom: 1px solid #f2f2f2; }
h2 { margin-top: 2px; font-size: 19px; font-weight: 600; letter-spacing: -.12px; color: #3f566b; }
.steps a { font-size: 13px; font-weight: 300; color: #6f9ff0; }
.steps-grid { margin-top: 20px; display: grid; grid-template-columns: 407px 384px 385px 1fr; }
.step { height: 240px; display: flex; flex-direction: column; align-items: center; text-align: center; border-right: 1px solid #f4f4f4; }
.step:last-child { border: 0; }
h3 { font-size: 13px; line-height: 19px; font-weight: 600; letter-spacing: -.2px; color: #3f566b; }
.step p { height: 46px; margin-top: 11px; font-size: 13px; line-height: 23px; font-weight: 300; letter-spacing: -.16px; color: #999; }
.step button { width: 92px; height: 41px; margin-top: 18px; padding-bottom: 2px; flex: none; border: 1px solid #2d6be0; border-radius: 2px; background: #4b8bea; color: #d6e5fc; font: 300 13px Inter, sans-serif; }
.step a { margin-top: 15px; }
.feedback { position: absolute; right: 0; top: 350px; width: 27px; height: 131px; display: flex; flex-direction: column; align-items: center; border: 2px solid #c6c6c6; border-right: 0; background: linear-gradient(90deg, #3f79e6, #2a63d6); }
.feedback span { height: 102px; writing-mode: vertical-rl; transform: rotate(180deg); text-align: center; color: #fff; font: 500 20px/25px Lato, sans-serif; letter-spacing: .45px; border-top: 1px solid #2450ad; }
.feedback svg { margin-top: 6px; }
```
